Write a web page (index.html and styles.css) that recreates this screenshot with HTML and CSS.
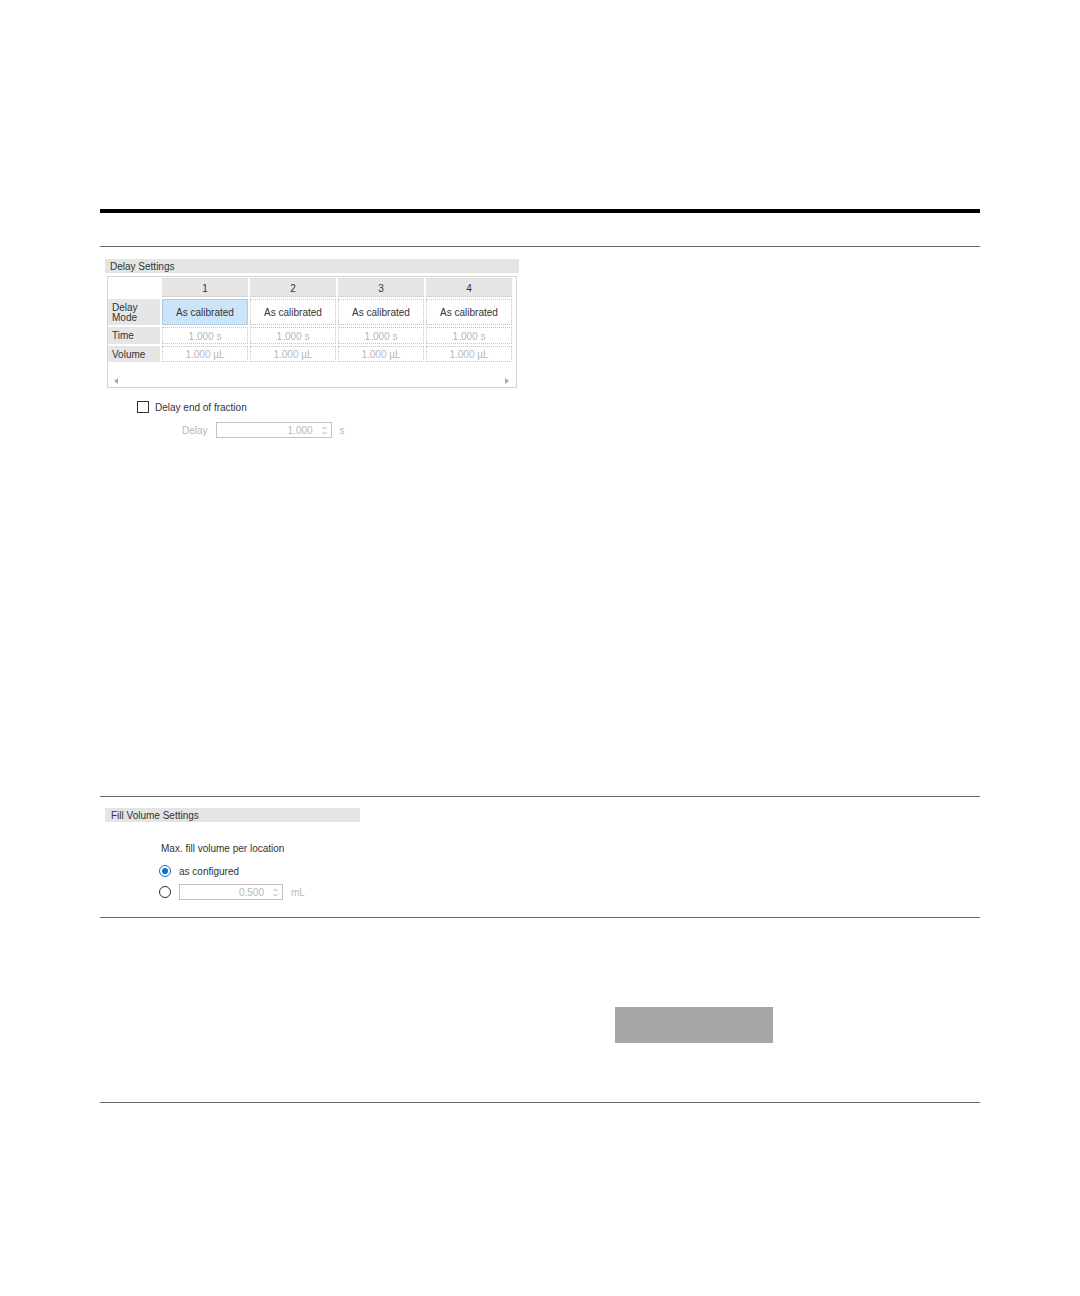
FILE: index.html
```html
<!DOCTYPE html>
<html>
<head>
<meta charset="utf-8">
<link rel="stylesheet" href="styles.css">
</head>
<body>
<div class="page">
  <div class="rule-thick"></div>
  <div class="rule"></div>

  <section class="sec sec-delay">
    <div class="bar bar-wide">Delay Settings</div>
    <div class="tablebox">
      <div class="grid">
        <div class="corner"></div>
        <div class="colh">1</div>
        <div class="colh">2</div>
        <div class="colh">3</div>
        <div class="colh">4</div>

        <div class="rowh rowh-mode">Delay<br>Mode</div>
        <div class="cell mode selected">As calibrated</div>
        <div class="cell mode">As calibrated</div>
        <div class="cell mode">As calibrated</div>
        <div class="cell mode">As calibrated</div>

        <div class="rowh">Time</div>
        <div class="cell dim">1.000 s</div>
        <div class="cell dim">1.000 s</div>
        <div class="cell dim">1.000 s</div>
        <div class="cell dim">1.000 s</div>

        <div class="rowh">Volume</div>
        <div class="cell dim">1.000 µL</div>
        <div class="cell dim">1.000 µL</div>
        <div class="cell dim">1.000 µL</div>
        <div class="cell dim">1.000 µL</div>
      </div>
      <div class="scroll">
        <svg width="4" height="6" viewBox="0 0 4 6"><path d="M4 0 L0 3 L4 6 Z" fill="#a8a8a8"/></svg>
        <svg width="4" height="6" viewBox="0 0 4 6"><path d="M0 0 L4 3 L0 6 Z" fill="#a8a8a8"/></svg>
      </div>
    </div>
    <div class="check-row">
      <span class="checkbox"></span>
      <span class="label">Delay end of fraction</span>
    </div>
    <div class="delay-row">
      <span class="label dimtext">Delay</span>
      <div class="spin spin-delay">
        <span class="val">1.000</span>
        <span class="arrows"><svg width="5" height="9" viewBox="0 0 5 9"><path d="M0.5 3 L2.5 1 L4.5 3" fill="none" stroke="#b0b0b0"/><path d="M0.5 6 L2.5 8 L4.5 6" fill="none" stroke="#b0b0b0"/></svg></span>
      </div>
      <span class="label dimtext unit">s</span>
    </div>
  </section>

  <div class="rule"></div>

  <section class="sec sec-fill">
    <div class="bar bar-narrow">Fill Volume Settings</div>
    <div class="fill-body">
      <div class="label max">Max. fill volume per location</div>
      <div class="radio-row">
        <span class="radio on"><span class="dot"></span></span>
        <span class="label">as configured</span>
      </div>
      <div class="radio-row">
        <span class="radio"></span>
        <div class="spin spin-fill">
          <span class="val">0.500</span>
          <span class="arrows"><svg width="5" height="9" viewBox="0 0 5 9"><path d="M0.5 3 L2.5 1 L4.5 3" fill="none" stroke="#b0b0b0"/><path d="M0.5 6 L2.5 8 L4.5 6" fill="none" stroke="#b0b0b0"/></svg></span>
        </div>
        <span class="label dimtext unit">mL</span>
      </div>
    </div>
  </section>

  <div class="rule"></div>

  <section class="sec sec-btn">
    <div class="graybtn"></div>
  </section>

  <div class="rule"></div>
</div>
</body>
</html>
```

FILE: styles.css
```css
html, body {
  margin: 0;
  padding: 0;
  background: #ffffff;
}
body {
  font-family: "Liberation Sans", Arial, sans-serif;
  font-size: 10px;
  color: #222;
}
.page {
  width: 880px;
  margin-left: 100px;
  padding-top: 209px;
}
.rule-thick {
  height: 4px;
  background: #000;
  margin-bottom: 33px;
}
.rule {
  height: 1px;
  background: #6a6a6a;
}
.sec {
  display: flex;
  flex-direction: column;
}
.sec-delay {
  height: 549px;
  padding-top: 12px;
  box-sizing: border-box;
}
.bar {
  margin-left: 5px;
  height: 14px;
  line-height: 15px;
  background: #e4e4e4;
  padding-left: 5px;
  color: #333;
  box-sizing: border-box;
}
.bar-wide { width: 414px; }
.bar-narrow { width: 255px; padding-left: 6px; }

.tablebox {
  margin-left: 7px;
  margin-top: 3px;
  width: 410px;
  height: 112px;
  border: 1px solid #d4d4d4;
  box-sizing: border-box;
  display: flex;
  flex-direction: column;
  padding: 1px 0 0 0;
}
.grid {
  display: grid;
  grid-template-columns: 52px repeat(4, 86px);
  grid-template-rows: 19px 26px 17px 16px;
  column-gap: 2px;
  row-gap: 2px;
}
.corner { background: #fff; }
.colh {
  background: #e6e6e6;
  display: flex;
  align-items: center;
  justify-content: center;
  color: #333;
  border-bottom: 1px dotted #c8c8c8;
  border-top: 1px dotted #d8d8d8;
  padding-top: 2px;
  box-sizing: border-box;
}
.rowh {
  background: #e6e6e6;
  padding-left: 4px;
  padding-top: 1px;
  display: flex;
  align-items: center;
  color: #333;
  line-height: 10px;
}
.cell {
  border: 1px dotted #c4c4c4;
  display: flex;
  align-items: center;
  justify-content: center;
  box-sizing: border-box;
  padding-top: 1px;
}
.cell.mode { color: #333; }
.cell.selected {
  background: #cce4f7;
  border: 1px solid #a9cdea;
}
.cell.dim { color: #b8b8b8; }
.scroll {
  margin-top: auto;
  height: 12px;
  display: flex;
  align-items: center;
  justify-content: space-between;
  padding-left: 6px;
  padding-right: 7px;
}
.check-row {
  display: flex;
  align-items: center;
  margin-left: 37px;
  margin-top: 13px;
  gap: 6px;
}
.checkbox {
  width: 10px;
  height: 10px;
  border: 1px solid #333;
  background: #fff;
  display: inline-block;
}
.label { color: #333; }
.dimtext { color: #b8b8b8; }
.delay-row {
  display: flex;
  align-items: center;
  margin-left: 82px;
  margin-top: 9px;
  gap: 8px;
}
.spin {
  height: 16px;
  border: 1px solid #c2c2c2;
  box-sizing: border-box;
  display: flex;
  align-items: center;
  justify-content: flex-end;
  color: #b8b8b8;
  padding-right: 4px;
  gap: 9px;
}
.spin-delay { width: 116px; }
.arrows { display: flex; align-items: center; }

.sec-fill {
  height: 120px;
  padding-top: 11px;
  box-sizing: border-box;
}
.fill-body {
  margin-left: 59px;
  display: flex;
  flex-direction: column;
  margin-top: 21px;
}
.max { margin-left: 2px; margin-bottom: 8px; }
.radio-row {
  display: flex;
  align-items: center;
  gap: 8px;
  height: 18px;
  margin-bottom: 3px;
}
.radio {
  width: 10px;
  height: 10px;
  border: 1px solid #333;
  border-radius: 50%;
  display: inline-flex;
  align-items: center;
  justify-content: center;
  box-sizing: content-box;
}
.radio.on { border-color: #1a6ec8; }
.radio .dot {
  width: 6px;
  height: 6px;
  border-radius: 50%;
  background: #0a6fd2;
}
.spin-fill { width: 104px; }

.sec-btn {
  height: 184px;
}
.graybtn {
  margin-left: 515px;
  margin-top: 89px;
  width: 158px;
  height: 36px;
  background: #a6a6a6;
}
```
